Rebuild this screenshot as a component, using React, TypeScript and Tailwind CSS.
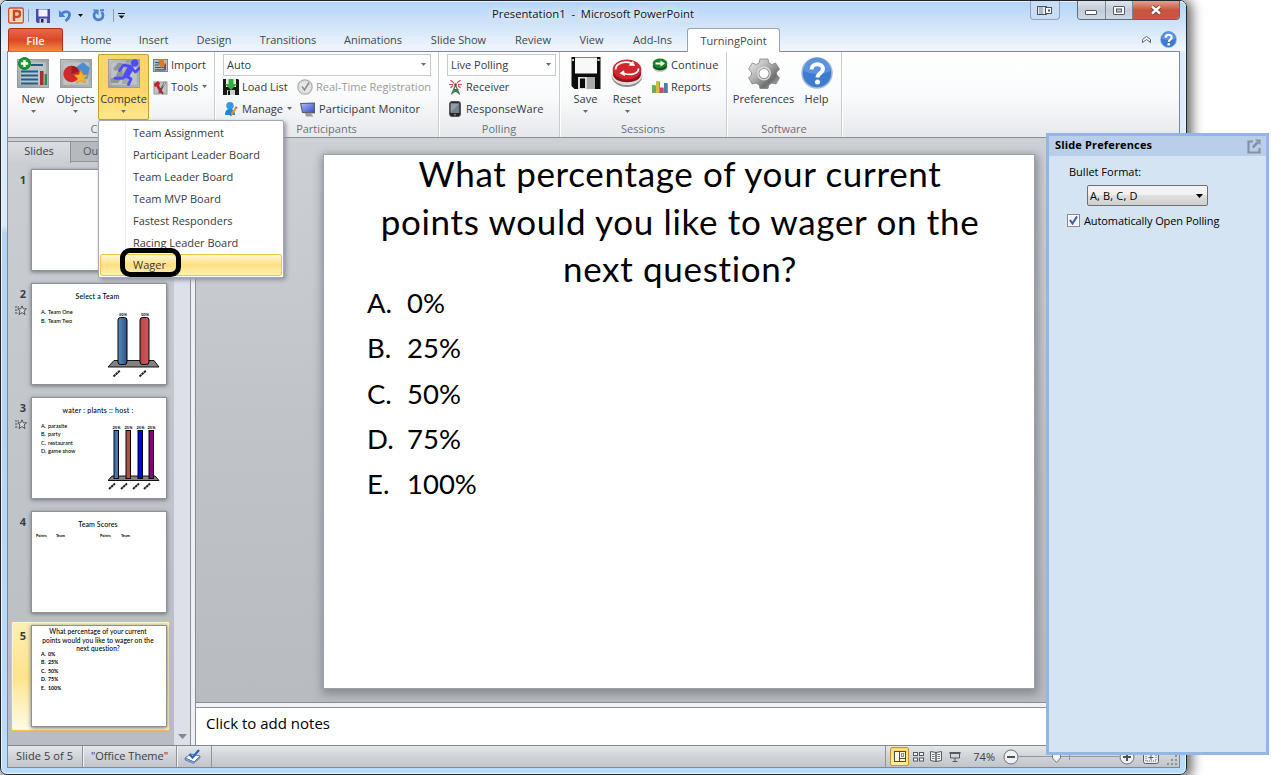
import type { ReactNode } from 'react';

const TABS = [
  { name: 'Home', width: 'w-[58px]' },
  { name: 'Insert', width: 'w-[57px]' },
  { name: 'Design', width: 'w-[64px]' },
  { name: 'Transitions', width: 'w-[84px]' },
  { name: 'Animations', width: 'w-[86px]' },
  { name: 'Slide Show', width: 'w-[85px]' },
  { name: 'Review', width: 'w-[64px]' },
  { name: 'View', width: 'w-[53px]' },
  { name: 'Add-Ins', width: 'w-[69px]' },
];

const MENU = [
  'Team Assignment',
  'Participant Leader Board',
  'Team Leader Board',
  'Team MVP Board',
  'Fastest Responders',
  'Racing Leader Board',
];

const ANSWERS = ['0%', '25%', '50%', '75%', '100%'];
const LETTERS = ['A.', 'B.', 'C.', 'D.', 'E.'];

function Caret({ className = '' }: { className?: string }) {
  return (
    <svg width="5" height="3" viewBox="0 0 5 3" className={`shrink-0 ${className}`}>
      <path d="M0 0h5L2.500 3z" fill="#6a6a6a" />
    </svg>
  );
}

/* ---------- ribbon icons ---------- */

function Frame({ id }: { id: string }) {
  return (
    <>
      <defs>
        <linearGradient id={id} x1="0" y1="0" x2="1" y2="1">
          <stop offset="0" stopColor="#c3c6c6" />
          <stop offset="0.500" stopColor="#9da2a2" />
          <stop offset="1" stopColor="#b4b8b8" />
        </linearGradient>
      </defs>
      <rect x="0.500" y="3.500" width="31" height="28" fill={`url(#${id})`} stroke="#989d9d" />
      <rect x="3" y="6" width="26" height="23" fill="#bfc3c3" stroke="#a9adad" strokeWidth="0.600" />
    </>
  );
}

function NewIcon() {
  return (
    <svg width="32" height="34" viewBox="0 0 32 34">
      <Frame id="frNew" />
      <path d="M14 9h12" stroke="#1f5f88" strokeWidth="2" />
      <path d="M4 15.500h17M4 19.500h17M4 23.500h17M4 27.500h17" stroke="#17618c" strokeWidth="2" />
      <rect x="23" y="15" width="3.500" height="14" fill="#a82c33" />
      <rect x="27.500" y="18" width="2.500" height="11" fill="#2e8a55" />
      <circle cx="7.500" cy="7.500" r="6" fill="#159a2d" stroke="#0a6418" strokeWidth="0.800" />
      <path d="M7.500 3.900v7.200M3.900 7.500h7.200" stroke="#fff" strokeWidth="2.400" />
    </svg>
  );
}

function ObjectsIcon() {
  return (
    <svg width="32" height="34" viewBox="0 0 32 34">
      <Frame id="frObj" />
      <path d="M23 6l7 6-2.500 11h-9L15 12z" fill="#4f8ccb" stroke="#84b2e0" strokeWidth="0.700" />
      <circle cx="11.500" cy="18" r="8.200" fill="#cf2a2c" />
      <path d="M11.500 18V9.800a8.200 8.200 0 0 1 7.500 5.700z" fill="#a11a1e" />
      <path d="M21 14l2 4.700 5 .4-3.800 3.300 1.200 5-4.400-2.700-4.400 2.700 1.200-5-3.800-3.300 5-.4z" fill="#f7b42c" stroke="#d98c14" strokeWidth="0.600" />
    </svg>
  );
}

function CompeteIcon() {
  return (
    <svg width="32" height="34" viewBox="0 0 32 34">
      <Frame id="frComp" />
      <path d="M14 7h-4l-5 6 3 2 3-2-4 9H3v5h7l5-7z" fill="#8f9494" />
      <path d="M18 4h5v7l-3 17h-6l1-8z" fill="#8f9494" opacity="0.600" />
      <circle cx="26.700" cy="7" r="3.700" fill="#4d4dff" />
      <path d="M22.500 10.500L15.500 9l-4 5.500M24.500 13.500l3 2.500 4-4M17 20.500l-2.500 1.800H7M18.500 20l4.500 3-2.500 5.500" fill="none" stroke="#4d4dff" strokeWidth="2.900" strokeLinejoin="round" strokeLinecap="round" />
      <path d="M22.500 12.500l-4 6.500" stroke="#4d4dff" strokeWidth="6.200" strokeLinecap="round" />
    </svg>
  );
}

function ImportIcon() {
  return (
    <svg width="15" height="15" viewBox="0 0 15 15">
      <rect x="0.500" y="1.500" width="14" height="12" fill="#b5baba" stroke="#7f8585" />
      <path d="M2 4.500h4M2 7h4M2 9.500h10M2 11.800h10" stroke="#1a6190" strokeWidth="1.200" />
      <path d="M11 6h2v6h-2z" fill="#93464c" />
      <path d="M6 1h5v4h2.500L8.500 10 4 5h2z" fill="#d67c2c" />
    </svg>
  );
}

function ToolsIcon() {
  return (
    <svg width="15" height="15" viewBox="0 0 15 15">
      <rect x="1" y="2" width="13" height="12" fill="#c2c2c2" stroke="#999" />
      <path d="M5 6l5 8M11.500 3L6 13" stroke="#4c4f52" strokeWidth="1.800" />
      <path d="M12 1.500l-3.500 6 4-3.500z" fill="#eee" stroke="#777" strokeWidth="0.700" />
      <path d="M1 4l4-3 2 2-1 3 3 6-2 1.500-3.500-7L1.500 7z" fill="#c8202c" />
    </svg>
  );
}

function LoadIcon() {
  return (
    <svg width="16" height="16" viewBox="0 0 16 16">
      <path d="M0 0h15l1 1v15H0z" fill="#181818" />
      <path d="M3 0h10v8H3z" fill="#ececec" />
      <path d="M4 11h8v5H4z" fill="#cfcfcf" />
      <path d="M5 11.500h2V16H5z" fill="#111" />
      <path d="M5.500 0h5v5h3.500l-6 6-6-6h3.500z" fill="#35ad3c" />
    </svg>
  );
}

function ManageIcon() {
  return (
    <svg width="14" height="16" viewBox="0 0 14 16">
      <circle cx="5" cy="4.700" r="3.700" fill="#2d9be8" />
      <path d="M0 14c0-4.500 2-6 5-6s5 1.500 5 6z" fill="#1b87d8" />
      <path d="M5.500 13L10 6.500l1.700 1.200L7 14.300z" fill="#e9952f" />
      <path d="M10 6.500l.8-1.200 1.700 1.200-.8 1.200z" fill="#c94343" />
      <path d="M5.500 13l-.3 2.500L7 14.300z" fill="#555" />
    </svg>
  );
}

function RegistrationIcon() {
  return (
    <svg width="16" height="16" viewBox="0 0 16 16">
      <circle cx="8" cy="8" r="7.200" fill="#e7e7e7" stroke="#acacac" strokeWidth="1.200" />
      <circle cx="8" cy="8" r="5.400" fill="none" stroke="#c2c2c2" strokeWidth="0.800" strokeDasharray="1 1.500" />
      <path d="M5 7.500l2.500 3.500L12 3.500" fill="none" stroke="#929292" strokeWidth="1.700" />
    </svg>
  );
}

function MonitorIcon() {
  return (
    <svg width="16" height="16" viewBox="0 0 16 16">
      <defs>
        <linearGradient id="scr" x1="0" y1="0" x2="1" y2="1">
          <stop offset="0" stopColor="#a8b6ff" />
          <stop offset="1" stopColor="#3a50c4" />
        </linearGradient>
      </defs>
      <path d="M5 12l6 .5 2.500 3H6z" fill="#9b9b9b" />
      <path d="M0 2l15-.5v11L2 12z" fill="#5a5d66" />
      <path d="M1.300 3l12.500-.3v8.600L3 10.900z" fill="url(#scr)" />
    </svg>
  );
}

function ReceiverIcon() {
  return (
    <svg width="13" height="15" viewBox="0 0 13 15">
      <path d="M6.500 5L2.500 14.500M6.500 5l4 9.500M4.500 9.500h4l-5 3.500M4.500 9.500l5 3.500" fill="none" stroke="#3e7550" strokeWidth="1.200" />
      <path d="M1.500 0l3.500 3M11.500 0L8 3M0 4.500h4M13 4.500H9M1.500 8L4 5.500M11.500 8L9 5.500" stroke="#d8474b" strokeWidth="1.100" />
      <circle cx="6.500" cy="4.500" r="1.300" fill="#8c3a3a" />
    </svg>
  );
}

function ResponseIcon() {
  return (
    <svg width="12" height="16" viewBox="0 0 12 16">
      <rect x="0.500" y="0.500" width="11" height="15" rx="2.500" fill="#25272a" stroke="#53575d" />
      <rect x="1.700" y="2.500" width="8.600" height="9.500" fill="#77818d" />
      <path d="M1.700 2.500h8.600l-8.600 9z" fill="#939da8" />
      <circle cx="6" cy="13.700" r="0.900" fill="#8e939a" />
    </svg>
  );
}

function SaveIcon() {
  return (
    <svg width="30" height="34" viewBox="0 0 30 34">
      <path d="M0.500 1h29v32H3.500l-3-3z" fill="#0c0c0c" />
      <path d="M4 1.500h22v16H4z" fill="#f8f8f8" />
      <path d="M26.500 3h2v2h-2zM1.200 3h1.800v2H1.200z" fill="#ddd" />
      <path d="M7 21h17v12H7z" fill="#dcdcdc" />
      <path d="M16 21h8v12h-8z" fill="#a9a9a9" />
      <path d="M9 22.500h5V32H9z" fill="#0c0c0c" />
    </svg>
  );
}

function ResetIcon() {
  return (
    <svg width="32" height="34" viewBox="0 0 32 34">
      <ellipse cx="16" cy="20" rx="15.300" ry="11" fill="#8a8a8a" />
      <ellipse cx="16" cy="18.500" rx="15.300" ry="10.500" fill="#dedede" />
      <path d="M2 14v4c0 11 28 11 28 0v-4z" fill="#931318" />
      <ellipse cx="16" cy="13.500" rx="14.300" ry="10" fill="#d0262c" />
      <path d="M4.500 13.500C5 7 14 4.500 21 7.500M27.500 12.500c0 5.500-8 7-14.500 5" fill="none" stroke="#fff" strokeWidth="1.800" />
      <path d="M22 5l2 5-6.500-.5zM13 14.200l-4.500 3 5.500 3z" fill="#fff" />
    </svg>
  );
}

function ContinueIcon() {
  return (
    <svg width="16" height="14" viewBox="0 0 16 14">
      <ellipse cx="8" cy="8.500" rx="7.500" ry="5.200" fill="#b5b9b5" />
      <path d="M1 5.500v2.500c0 5.500 14 5.500 14 0V5.500z" fill="#0c4a13" />
      <ellipse cx="8" cy="5.500" rx="7.300" ry="5" fill="#168326" />
      <path d="M3.500 4.500h5V2.500l4.500 3-4.500 3V6.500h-5z" fill="#fff" />
    </svg>
  );
}

function ReportsIcon() {
  return (
    <svg width="16" height="14" viewBox="0 0 16 14">
      <path d="M0 5h3.500v8H0z" fill="#5fb74f" />
      <path d="M4 1h3.500v12H4z" fill="#d2bd46" />
      <path d="M8 7.500h3.500v5.500H8z" fill="#cb4a5e" />
      <path d="M12 3h3.500v10H12z" fill="#4a7cb4" />
      <path d="M3.500 6v7M7.500 2v11M11.500 8v5M15.500 4v9" stroke="#8b8f94" />
    </svg>
  );
}

function GearIcon() {
  return (
    <svg width="32" height="34" viewBox="0 0 32 34">
      <defs>
        <linearGradient id="gear" x1="0" y1="0" x2="1" y2="1">
          <stop offset="0" stopColor="#f4f4f4" />
          <stop offset="0.450" stopColor="#adadad" />
          <stop offset="0.720" stopColor="#6e6e6e" />
          <stop offset="1" stopColor="#cfcfcf" />
        </linearGradient>
      </defs>
      <path
        fillRule="evenodd"
        d="M12 3h8l.8 3.800 3 1.700L27.500 7l4 6.200-2.800 2.800v3l2.800 2.800L28 28l-4-1-3 1.800-1 3.700h-8l-1-3.700-3-1.800-3.800 1L.6 21.800l2.800-2.800v-3L.6 13.200 4.200 7l4 1.500 3-1.700zM16 12.500a5 5 0 1 0 .01 0z"
        fill="url(#gear)"
        stroke="#808080"
        strokeWidth="0.800"
      />
      <circle cx="16" cy="17.500" r="6.200" fill="none" stroke="#d9d9d9" strokeWidth="1.400" />
    </svg>
  );
}

function HelpIcon({ size }: { size: number }) {
  return (
    <svg width={size} height={size} viewBox="0 0 32 32">
      <circle cx="16" cy="16" r="15" fill="#3d7bd0" stroke="#a5b8d3" strokeWidth="1.500" />
      <path d="M2.500 14a13.500 13.500 0 0 1 27 0c-8 4-19 4-27 0z" fill="#5a92dd" />
      <path d="M10.500 12.500c0-7 11.500-7 11.500-.5 0 4-5.500 4-5.500 8.500" fill="none" stroke="#fff" strokeWidth="4" />
      <circle cx="16.500" cy="25" r="2.500" fill="#fff" />
    </svg>
  );
}

/* ---------- ribbon parts ---------- */

function Big({ label, icon, width, caret = true }: { label: string; icon: ReactNode; width: string; caret?: boolean }) {
  return (
    <div className={`flex h-[66px] flex-col items-center ${width}`}>
      <div className="flex h-[36px] shrink-0 items-end">{icon}</div>
      <span className="mt-[1px] h-[15px] leading-[15px]">{label}</span>
      {caret && <Caret className="mt-[4px]" />}
    </div>
  );
}

function Small({ icon, children, gap = 'gap-[3px]' }: { icon: ReactNode; children: ReactNode; gap?: string }) {
  return (
    <div className={`flex h-[22px] items-center ${gap}`}>
      {icon}
      <div className="-mt-[2px] flex items-center gap-[4px]">{children}</div>
    </div>
  );
}

function Group({ label, width, children }: { label: string; width: string; children: ReactNode }) {
  return (
    <div className={`flex shrink-0 flex-col border-r border-[#c9ccd1] pt-[2px] shadow-[1px_0_0_#ffffff] ${width}`}>
      <div className="flex h-[66px]">{children}</div>
      <div className="flex h-[17px] items-center justify-center text-[#6d7077]">{label}</div>
    </div>
  );
}

function Combo({ value, width }: { value: string; width: string }) {
  return (
    <div className={`flex h-[22px] items-center justify-between border border-[#c6c9ce] bg-white pr-[4px] pb-[2px] pl-[3px] ${width}`}>
      <span>{value}</span>
      <Caret />
    </div>
  );
}

/* ---------- thumbnails ---------- */

function StarMark() {
  return (
    <svg width="12" height="11" viewBox="0 0 12 11" className="mt-[4px] -mr-[1px]">
      <path d="M7 0.800l1.300 3h3.200L9 6l1 3.600-3-2-3 2L5 6 3 3.800h2.800z" fill="#d9dbde" stroke="#45484c" strokeWidth="0.900" />
      <path d="M0 2h4M0 5h3M0 8h3" stroke="#45484c" strokeWidth="1" strokeDasharray="2 0.600" />
    </svg>
  );
}

function Thumb({ n, star, selected, children }: { n: number; star?: boolean; selected?: boolean; children?: ReactNode }) {
  const highlight = selected
    ? 'border-[#f0c650] bg-linear-to-b from-[#fdeeb6] via-[#fde48a] to-[#fffbe6] shadow-[inset_0_0_0_1px_#fff6d0]'
    : 'border-transparent';
  return (
    <div className={`flex h-[110px] w-[159px] shrink-0 rounded-[2px] border pt-[3px] ${highlight}`}>
      <div className="flex w-[19px] shrink-0 flex-col items-end pt-[3px] pr-[5px]">
        <span className="text-[11px] leading-[15px] font-bold text-[#3a3d42]">{n}</span>
        {star && <StarMark />}
      </div>
      <div className="relative h-[102px] w-[136px] shrink-0 overflow-hidden border border-[#8d9299] bg-white font-['Lato','Open_Sans',sans-serif] text-[6px] leading-[8px] font-medium text-black shadow-[0_1px_4px_#6d7278]">
        {children}
      </div>
    </div>
  );
}

function MiniList({ items, className }: { items: string[]; className: string }) {
  return (
    <ul className={className}>
      {items.map((t, i) => (
        <li key={t} className="flex">
          <span className="w-[7px]">{LETTERS[i]}</span>
          <span>{t}</span>
        </li>
      ))}
    </ul>
  );
}

function TwoBars() {
  return (
    <svg width="52" height="66" viewBox="0 0 52 66" className="absolute top-[27px] right-[6px]">
      <defs>
        <linearGradient id="bl"><stop offset="0" stopColor="#5a8bc4" /><stop offset="1" stopColor="#2f5482" /></linearGradient>
        <linearGradient id="rd"><stop offset="0" stopColor="#b8474a" /><stop offset="1" stopColor="#c9595b" /></linearGradient>
      </defs>
      <path d="M6 49.500h40l5 6.500H0z" fill="#828282" stroke="#000" strokeWidth="0.900" />
      <rect x="10" y="6.500" width="9" height="47" rx="2.500" fill="url(#bl)" stroke="#000" />
      <rect x="32" y="6.500" width="9" height="47" rx="2.500" fill="url(#rd)" stroke="#000" />
      <text x="11" y="5" fontSize="4" fontWeight="700">50%</text>
      <text x="33" y="5" fontSize="4" fontWeight="700">50%</text>
      <path d="M5.500 65.500l6.500-6M31.500 65.500l6.500-6" stroke="#222" strokeWidth="2" strokeDasharray="2.500 0.500" />
    </svg>
  );
}

function FourBars() {
  const bars = [
    { x: 6, fill: '#4577ae' },
    { x: 18, fill: '#b94a4c' },
    { x: 30, fill: '#0000f0' },
    { x: 41, fill: '#800080' },
  ];
  return (
    <svg width="52" height="68" viewBox="0 0 52 68" className="absolute top-[25px] right-[6px]">
      <path d="M4 53h43l4 4.500H0z" fill="#828282" stroke="#000" strokeWidth="0.900" />
      {bars.map((b) => (
        <g key={b.x}>
          <rect x={b.x} y="7.500" width="4.500" height="48" fill={b.fill} stroke="#000" />
          <text x={b.x - 1.5} y="5.500" fontSize="4" fontWeight="700">25%</text>
          <path d={`M${b.x - 5} 66l6-5.500`} stroke="#222" strokeWidth="2" strokeDasharray="2.500 0.500" />
        </g>
      ))}
    </svg>
  );
}

function LeftPane() {
  return (
    <div className="flex w-[182px] shrink-0 flex-col bg-linear-to-b from-[#cbcfd4] to-[#b9bdc3]">
      <div className="flex h-[25px] pt-[3px]">
        <div className="flex w-[63px] items-center justify-center border-t border-r border-[#8f949a] bg-linear-to-b from-[#dadde1] to-[#cbced3] pb-[4px] text-[#3f4247]">Slides</div>
        <div className="flex h-[21px] flex-1 items-center border-t border-b border-[#8f949a] bg-[#b6babf] pb-[2px] pl-[12px] text-[#55585d]">Outline</div>
      </div>
      <div className="flex flex-1">
        <div className="flex w-[166px] flex-col gap-[4px] pt-[2px] pl-[3px]">
          <Thumb n={1} />
          <Thumb n={2} star>
            <div className="mt-[8px] text-center text-[7px] tracking-[0.160px]">
              <span className="mr-[3px]">Select a Team</span>
            </div>
            <MiniList items={['Team One', 'Team Two']} className="mt-[8px] ml-[9px] text-[5.500px] leading-[9px]" />
            <TwoBars />
          </Thumb>
          <Thumb n={3} star>
            <div className="mt-[8px] pr-[2px] text-center text-[7px] tracking-[0.220px]">water : plants :: host :</div>
            <MiniList items={['parasite', 'party', 'restaurant', 'game show']} className="mt-[8px] ml-[9px] text-[5.500px] leading-[8.300px]" />
            <FourBars />
          </Thumb>
          <Thumb n={4}>
            <div className="mt-[8px] pr-[2px] text-center text-[7px] tracking-[0.100px]">Team Scores</div>
            <div className="mt-[4px] flex pl-[4px] text-[3.800px] font-bold">
              <span className="w-[20px]">Points</span>
              <span className="w-[44px]">Team</span>
              <span className="w-[21px]">Points</span>
              <span>Team</span>
            </div>
          </Thumb>
          <Thumb n={5} selected>
            <div className="mt-[1px] pr-[2px] text-center text-[6.600px] leading-[8.500px] tracking-[0.080px]">
              What percentage of your current
              <br />
              points would you like to wager on the
              <br />
              next question?
            </div>
            <MiniList items={ANSWERS} className="-mt-[3px] ml-[9px] text-[5.200px] leading-[8.500px] font-bold" />
          </Thumb>
        </div>
        <div className="flex flex-1 flex-col items-center justify-end bg-[#dde0e9] pb-[6px]">
          <svg width="9" height="5" viewBox="0 0 9 5">
            <path d="M0 0h9L4.500 5z" fill="#7b8a90" />
          </svg>
        </div>
      </div>
    </div>
  );
}

/* ---------- title bar ---------- */

function QuickAccess() {
  return (
    <div className="flex w-[120px] items-center pt-[2px] pl-[1px]">
      <svg width="16" height="17" viewBox="0 0 16 17">
        <rect x="0.700" y="1" width="14.600" height="15" rx="1.500" fill="#fbe5d8" stroke="#cf4c1c" strokeWidth="1.300" />
        <path d="M2.500 3h11v11h-11z" fill="#f7cbb2" />
        <path d="M6 14V4h3.200a2.800 2.800 0 0 1 0 5.800H6" fill="none" stroke="#c9481b" strokeWidth="2.300" />
      </svg>
      <div className="ml-[4px] h-[13px] w-px bg-[#8f9cad]" />
      <svg width="14" height="14" viewBox="0 0 14 14" className="ml-[7px]">
        <path d="M0 0h14v14H1.500L0 12.500z" fill="#4a4bab" />
        <path d="M2.500 0.500h9v7h-9z" fill="#f1f3fb" />
        <path d="M3.500 9.500h7.500V14H3.500z" fill="#c9d1e2" />
        <path d="M5 10h2.500v3.500H5z" fill="#22264a" />
      </svg>
      <svg width="13" height="13" viewBox="0 0 13 13" className="ml-[9px]">
        <path d="M2.500 5C6 1.500 11 2 10.500 6.500c-.3 2.500-2 4-4 5.500" fill="none" stroke="#4a80d0" strokeWidth="2.700" />
        <path d="M0 1v7h6.500z" fill="#4a80d0" />
      </svg>
      <svg width="5" height="3" viewBox="0 0 5 3" className="ml-[6px]"><path d="M0 0h5L2.500 3z" fill="#111" /></svg>
      <svg width="13" height="13" viewBox="0 0 13 13" className="ml-[9px]">
        <path d="M3.500 3a4.500 4.500 0 1 0 6 0" fill="none" stroke="#4a80d0" strokeWidth="2.700" />
        <path d="M0.500 0.500h6v6z" fill="#4a80d0" />
        <path d="M8 1.500l4-.5" stroke="#4a80d0" strokeWidth="2" />
      </svg>
      <div className="ml-[8px] h-[13px] w-px bg-[#8f9cad]" />
      <svg width="7" height="6" viewBox="0 0 7 6" className="ml-[4px] shrink-0"><path d="M0 0h7v1H0zM0.500 2.500h6l-3 3z" fill="#111" /></svg>
    </div>
  );
}

function WindowButtons() {
  return (
    <div className="flex h-[19px] self-start">
      <div className="flex w-[30px] items-center justify-center rounded-b-[4px] border border-t-0 border-[#93a5bb] bg-[#c9ddf4]">
        <svg width="15" height="9" viewBox="0 0 15 9">
          <rect x="0.500" y="0.500" width="9" height="8" fill="#e5eaf1" stroke="#4c545f" />
          <path d="M3 1v7M5 1v7" stroke="#7e8793" />
          <rect x="8.500" y="1.500" width="6" height="6" fill="#fff" stroke="#4c545f" />
          <rect x="11" y="3.500" width="2" height="2" fill="#4c545f" />
        </svg>
      </div>
      <div className="ml-[17px] flex overflow-hidden rounded-b-[4px] border border-t-0 border-[#5f6b7a]">
        <div className="flex w-[28px] items-end justify-center border-r border-[#7b8796] bg-linear-to-b from-[#dfe5ec] via-[#c3ccd7] to-[#cfd9e4] pb-[4px]">
          <svg width="12" height="5" viewBox="0 0 12 5"><rect x="0.500" y="0.500" width="11" height="4" rx="0.500" fill="#fff" stroke="#535866" /></svg>
        </div>
        <div className="flex w-[27px] items-center justify-center border-r border-[#7b8796] bg-linear-to-b from-[#dfe5ec] via-[#c3ccd7] to-[#cfd9e4]">
          <svg width="12" height="9" viewBox="0 0 12 9"><rect x="0.500" y="0.500" width="11" height="8" rx="0.500" fill="#fff" stroke="#535866" /><rect x="3.500" y="3" width="5" height="3" fill="#bac8d8" stroke="#535866" /></svg>
        </div>
        <div className="flex w-[46px] items-center justify-center bg-linear-to-b from-[#e3a090] via-[#c8543f] to-[#c9573f]">
          <svg width="12" height="10" viewBox="0 0 12 10"><path d="M2 1.500l8 7M10 1.500l-8 7" stroke="#5c3236" strokeWidth="4" /><path d="M2 1.500l8 7M10 1.500l-8 7" stroke="#fff" strokeWidth="2.400" /></svg>
        </div>
      </div>
    </div>
  );
}

function Ribbon() {
  return (
    <div className="flex h-[86px] shrink-0 border-b border-[#8a8f96] bg-linear-to-b from-white via-[#fafbfc] to-[#e6e9ec]">
      <Group label="Content" width="w-[207px]">
        <div className="ml-[2px] flex">
          <Big label="New" icon={<NewIcon />} width="w-[46px]" />
          <Big label="Objects" icon={<ObjectsIcon />} width="w-[39px]" />
        </div>
        <div className="ml-[3px] rounded-[2px] bg-linear-to-b from-[#fbd56f] via-[#fdd468] to-[#ffe98c] shadow-[inset_0_0_0_1px_#c79a35]">
          <Big label="Compete" icon={<CompeteIcon />} width="w-[51px]" />
        </div>
        <div className="ml-[4px]">
          <Small icon={<ImportIcon />}>Import</Small>
          <Small icon={<ToolsIcon />}>Tools<Caret /></Small>
        </div>
      </Group>
      <Group label="Participants" width="w-[224px]">
        <div className="ml-[8px]">
          <Combo value="Auto" width="w-[208px]" />
          <div className="flex">
            <div className="w-[74px]"><Small icon={<LoadIcon />}>Load List</Small></div>
            <Small icon={<RegistrationIcon />}><span className="text-[#9a9a9a]">Real-Time Registration</span></Small>
          </div>
          <div className="flex">
            <div className="w-[75px] pl-[2px]"><Small icon={<ManageIcon />}>Manage<Caret /></Small></div>
            <div className="pl-[2px]"><Small icon={<MonitorIcon />}><span className="tracking-[0.090px]">Participant Monitor</span></Small></div>
          </div>
        </div>
      </Group>
      <Group label="Polling" width="w-[121px]">
        <div className="ml-[8px]">
          <Combo value="Live Polling" width="w-[109px]" />
          <div className="pl-[2px]"><Small icon={<ReceiverIcon />} gap="gap-[4px]">Receiver</Small></div>
          <div className="pl-[2px]"><Small icon={<ResponseIcon />} gap="gap-[5px]"><span className="tracking-[0.080px]">ResponseWare</span></Small></div>
        </div>
      </Group>
      <Group label="Sessions" width="w-[167px]">
        <div className="ml-[5px] flex">
          <Big label="Save" icon={<SaveIcon />} width="w-[41px]" />
          <Big label="Reset" icon={<ResetIcon />} width="w-[42px]" />
        </div>
        <div className="ml-[4px]">
          <Small icon={<ContinueIcon />}><span className="tracking-[0.100px]">Continue</span></Small>
          <Small icon={<ReportsIcon />}>Reports</Small>
        </div>
      </Group>
      <Group label="Software" width="w-[115px]">
        <Big label="Preferences" icon={<GearIcon />} width="w-[73px]" caret={false} />
        <Big label="Help" icon={<div className="pb-[1px]"><HelpIcon size={32} /></div>} width="w-[33px]" caret={false} />
      </Group>
    </div>
  );
}

function SlideArea() {
  return (
    <div className="flex min-w-0 flex-1 flex-col border-l border-[#8a8f96]">
      <div className="h-[565px] shrink-0 border-b border-[#8a8f96] bg-linear-to-b from-[#cdd0d5] via-[#c0c4c9] to-[#b8bbc0] pt-[17px] pl-[128px]">
        <div className="flex h-[533px] w-[710px] flex-col bg-white font-['Lato','Open_Sans',sans-serif] text-black shadow-[0_0_0_1px_#9ba1a7,1px_3px_9px_3px_#858a90]">
          <h1 className="-mt-[5px] h-[130px] pl-[2px] text-center text-[35px] leading-[47.500px] tracking-[0.670px]">
            What percentage of your current
            <br />
            points would you like to wager on the
            <br />
            next question?
          </h1>
          <ul className="pl-[43px] text-[27.500px] leading-[45.300px]">
            {ANSWERS.map((a, i) => (
              <li key={a} className="flex">
                <span className="w-[40px]">{LETTERS[i]}</span>
                <span>{a}</span>
              </li>
            ))}
          </ul>
        </div>
      </div>
      <div className="h-[5px] shrink-0 border-b border-[#8a8f96] bg-[#f0f2f5]" />
      <div className="flex-1 bg-white pt-[5px] pl-[10px] text-[15px] leading-[20px] text-black">Click to add notes</div>
    </div>
  );
}

function StatusBar() {
  return (
    <div className="flex h-[23px] shrink-0 items-center border-t border-b border-[#85898f] bg-linear-to-b from-[#e4e7ea] via-[#d0d4d9] to-[#c0c5cb] text-[#3b3e43]">
      <div className="flex h-full w-[75px] items-center border-r border-[#8f949a] pb-[2px] pl-[8px] tracking-[0.100px]">Slide 5 of 5</div>
      <div className="flex h-full w-[94px] items-center justify-center border-r border-[#8f949a] pb-[2px] shadow-[inset_1px_0_0_#eef0f2]">"Office Theme"</div>
      <div className="flex h-full w-[35px] items-center justify-center border-r border-[#8f949a] pr-[3px] pb-[1px] shadow-[inset_1px_0_0_#eef0f2]">
        <svg width="17" height="15" viewBox="0 0 17 15">
          <path d="M1 9l6-4 9 2-6 6z" fill="#fff" stroke="#54739f" />
          <path d="M1 9v2l8.500 3.500L16 9V7l-6 6z" fill="#8aa7d4" stroke="#54739f" strokeWidth="0.700" />
          <path d="M5.500 5l3 3.500L15 1" fill="none" stroke="#2e62c9" strokeWidth="2.200" />
        </svg>
      </div>
      <div className="flex-1" />
      <div className="flex h-full items-center border-l border-[#8f949a] pl-[4px]">
        <div className="flex h-[19px] w-[19px] items-center justify-center rounded-[2px] border border-[#c4922f] bg-linear-to-b from-[#fbd972] to-[#ffee9c]">
          <svg width="12" height="11" viewBox="0 0 12 11" fill="none" stroke="#4c4a44"><rect x="0.500" y="0.500" width="11" height="10" fill="#fff8dc" /><path d="M5.500 0.500v10M5.500 7.500h6" /><rect x="7.500" y="2.500" width="2" height="3" stroke="#8d8a80" /></svg>
        </div>
        <svg width="11" height="10" viewBox="0 0 11 10" className="ml-[4px]" fill="#f4f5f6" stroke="#55585e"><rect x="0.500" y="0.500" width="4" height="3" /><rect x="6.500" y="0.500" width="4" height="3" /><rect x="0.500" y="6" width="4" height="3" /><rect x="6.500" y="6" width="4" height="3" /></svg>
        <svg width="12" height="11" viewBox="0 0 12 11" className="ml-[6px]" fill="#f4f5f6" stroke="#55585e"><path d="M0.500 0.500l5.500 1v9l-5.500-1zM11.500 0.500L6 1.500v9l5.500-1z" /><path d="M2 3.500h2.500M2 5.500h2.500M2 7.500h2.500M7.500 3.500H10M7.500 5.500H10M7.500 7.500H10" strokeWidth="0.800" /></svg>
        <svg width="12" height="10" viewBox="0 0 12 10" className="ml-[7px]" fill="none" stroke="#55585e"><path d="M0.500 1h11" strokeWidth="2" /><path d="M1.500 2v4h9V2M6 6v3M3.500 9.500h5" /></svg>
        <span className="-mt-[1px] ml-[12px]">74%</span>
        <svg width="16" height="16" viewBox="0 0 16 16" className="ml-[8px]"><circle cx="8" cy="8" r="7" fill="#f0f1f3" stroke="#6c7076" /><path d="M4 8h8" stroke="#4e5157" strokeWidth="2" /></svg>
        <svg width="100" height="12" viewBox="0 0 100 12"><path d="M0 5.500h100" stroke="#92969c" /><path d="M33.500 0h8v7l-4 4.500-4-4.500z" fill="#f3f4f5" stroke="#74787e" /><path d="M50.500 3v6" stroke="#92969c" /></svg>
        <svg width="16" height="16" viewBox="0 0 16 16"><circle cx="8" cy="8" r="7" fill="#f0f1f3" stroke="#6c7076" /><path d="M4 8h8M8 4v8" stroke="#4e5157" strokeWidth="2" /></svg>
        <svg width="16" height="14" viewBox="0 0 16 14" className="ml-[8px]"><rect x="0.500" y="0.500" width="15" height="13" rx="2" fill="#eceef0" stroke="#5c6066" /><path d="M3 3h10v8H3z" fill="none" stroke="#5c6066" strokeDasharray="1 1" /><path d="M8 5v5M5.500 7.500h5" stroke="#5c6066" /></svg>
        <svg width="12" height="12" viewBox="0 0 12 12" className="mt-[8px] ml-[8px]" fill="#8d9197"><path d="M8 0h2v2H8zM4 4h2v2H4zM8 4h2v2H8zM0 8h2v2H0zM4 8h2v2H4zM8 8h2v2H8z" /></svg>
      </div>
    </div>
  );
}

function CompeteMenu() {
  return (
    <div className="absolute top-[120px] left-[98px] w-[186px] rounded-[2px] border border-[#a5a9af] bg-white p-[1px] text-[#3b3b3b] shadow-[2px_2px_4px_#8e93a0]">
      <div className="bg-linear-to-r from-white from-[25px] via-[#dddfe2] via-[25px] to-white to-[26px]">
        {MENU.map((m) => (
          <div key={m} className="h-[22px] pl-[33px] leading-[22px] -tracking-[0.030px]">{m}</div>
        ))}
      </div>
      <div className="relative h-[22px] rounded-[2px] border border-[#edc64b] bg-linear-to-b from-[#fff6d5] via-[#fddf7f] to-[#fff1b4] pl-[32px] leading-[19px]">
        Wager
        <div className="absolute -top-[7px] left-[19px] h-[29px] w-[61px] rounded-[10px] border-[5px] border-black" />
      </div>
    </div>
  );
}

function PreferencesPanel() {
  return (
    <div className="absolute top-[133px] left-[1046px] flex h-[622px] w-[223px] flex-col border-[3px] border-[#94b6e5] bg-[#d5e4f3] text-black">
      <div className="flex h-[20px] shrink-0 items-center justify-between bg-[#b8cee9] pr-[5px] pl-[6px]">
        <span className="mb-[4px] text-[11px] font-bold tracking-[0.150px]">Slide Preferences</span>
        <svg width="14" height="15" viewBox="0 0 14 15">
          <path d="M6 2.500H1.500v11h11V9" fill="none" stroke="#8492a3" strokeWidth="2.200" />
          <path d="M8 0.500h5.500V6zM5 7.500l1.500 2L12 4l-2-2z" fill="#8492a3" />
        </svg>
      </div>
      <div className="pt-[8px] pl-[20px]">Bullet Format:</div>
      <div className="mt-[6px] ml-[38px] flex h-[21px] w-[121px] items-center justify-between rounded-[2px] border border-[#707070] bg-linear-to-b from-[#f2f2f2] from-45% via-[#e0e0e0] via-50% to-[#cfcfcf] pr-[4px] pl-[2px]">
        <span className="tracking-[0.150px]">A, B, C, D</span>
        <svg width="7" height="4" viewBox="0 0 7 4"><path d="M0 0h7L3.500 4z" fill="#000" /></svg>
      </div>
      <div className="mt-[7px] flex items-center gap-[4px] pl-[18px]">
        <span className="flex h-[13px] w-[13px] items-center justify-center border border-[#85898e] bg-[#eef1f6] shadow-[inset_0_0_0_1px_#fff]">
          <svg width="9" height="9" viewBox="0 0 9 9"><path d="M1 4l2.500 3.500L8 0.500" fill="none" stroke="#42589c" strokeWidth="2" /></svg>
        </span>
        <span className="-tracking-[0.100px] whitespace-nowrap">Automatically Open Polling</span>
      </div>
    </div>
  );
}

export default function App() {
  return (
    <div className="relative h-[775px] w-[1271px] overflow-hidden bg-white font-['Open_Sans','Noto_Sans',sans-serif] text-[11px] leading-[15px] whitespace-nowrap text-[#35383d]">
      <div className="flex h-[775px] w-[1187px] flex-col rounded-[7px] border border-[#1e2430] bg-linear-to-b from-[#dcebfa] from-29% via-[#b5d3f3] via-30% to-[#b9dcfc] px-[6px] shadow-[2px_2px_12px_3px_#6a6a6a,inset_0_0_0_1px_#eef6fd]">
        <div className="-mx-[6px] flex h-[50px] shrink-0 flex-col rounded-t-[6px] bg-linear-to-b from-[#b3d4f8] via-[#cfe3f8] via-45% to-[#f2f7fd] px-[6px] shadow-[inset_0_1px_0_#e8f3fe]">
          <div className="flex h-[27px] items-center justify-between">
            <QuickAccess />
            <div className="mt-[-2px] ml-[29px] text-[11.250px] whitespace-pre text-[#141414] [text-shadow:0_0_8px_#fff,0_0_8px_#fff]">{'Presentation1  -  Microsoft PowerPoint'}</div>
            <WindowButtons />
          </div>
          <div className="flex h-[23px] text-[#44474c]">
            <div className="mr-[4px] ml-[1px] flex w-[55px] items-center justify-center rounded-t-[3px] border border-b-0 border-[#b23018] bg-linear-to-b from-[#e8694a] via-[#dc4527] to-[#f08a3f] font-semibold text-white">File</div>
            {TABS.map((t) => (
              <div key={t.name} className={`flex items-center justify-center ${t.width}`}>{t.name}</div>
            ))}
            <div className="relative z-10 -mb-[1px] flex w-[93px] items-center justify-center rounded-t-[3px] border border-b-0 border-[#9aa3ae] bg-white pb-[1px]">TurningPoint</div>
            <div className="flex flex-1 items-center justify-end gap-[9px] pr-[3px]">
              <svg width="9" height="7" viewBox="0 0 9 7"><path d="M4.500 0.500l4 3v3l-4-3-4 3v-3z" fill="#fff" stroke="#4d5259" strokeWidth="0.900" /></svg>
              <HelpIcon size={17} />
            </div>
          </div>
        </div>
        <div className="flex min-h-0 flex-1 flex-col border-x border-t border-[#7f8893]">
          <Ribbon />
          <div className="flex min-h-0 flex-1">
            <LeftPane />
            <div className="w-[5px] shrink-0 border-l border-[#8a8f96] bg-[#eef0f4]" />
            <SlideArea />
          </div>
          <StatusBar />
        </div>
        <div className="h-[6px] shrink-0" />
      </div>
      <CompeteMenu />
      <PreferencesPanel />
    </div>
  );
}
